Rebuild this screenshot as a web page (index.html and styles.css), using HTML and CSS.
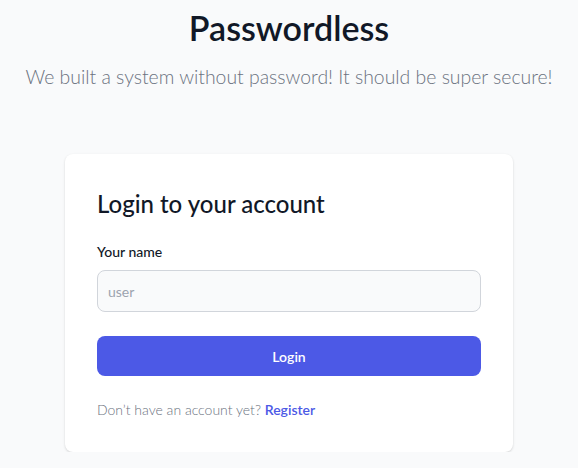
FILE: index.html
```html
<!DOCTYPE html>
<html lang="en">
<head>
<meta charset="utf-8">
<title>Passwordless</title>
<link rel="stylesheet" href="styles.css">
</head>
<body>
<main class="page">
  <header class="hero">
    <h1 class="hero-title">Passwordless</h1>
    <p class="hero-sub">We built a system without password! It should be super secure!</p>
  </header>
  <section class="card">
    <h2 class="card-title">Login to your account</h2>
    <form class="form">
      <div class="field">
        <label class="label" for="name">Your name</label>
        <input class="input" id="name" type="text" placeholder="user">
      </div>
      <button class="btn" type="button">Login</button>
      <p class="footer-text">Don’t have an account yet? <a class="link" href="#">Register</a></p>
    </form>
  </section>
</main>
</body>
</html>
```
FILE: styles.css
```css
* { box-sizing: border-box; }
html, body { margin: 0; padding: 0; }
body {
  background: #f9fafb;
  font-family: "Lato", "Noto Sans", sans-serif;
  color: #111827;
}
.page {
  display: flex;
  flex-direction: column;
  align-items: center;
  padding-top: 4px;
}
.hero { text-align: center; }
.hero-title {
  margin: 0;
  font-size: 34px;
  line-height: 48px;
  font-weight: 600;
  color: #111827;
}
.hero-sub {
  margin: 11px 0 0;
  font-size: 19.4px;
  line-height: 28px;
  font-weight: 300;
  color: #6b7280;
}
.card {
  margin-top: 63px;
  width: 448px;
  background: #fff;
  border-radius: 8px;
  box-shadow: 0 1px 3px rgba(0,0,0,0.1), 0 1px 2px rgba(0,0,0,0.06);
  padding: 32px;
}
.card-title {
  margin: 0;
  font-size: 24px;
  line-height: 36px;
  font-weight: 500;
  color: #111827;
}
.form {
  margin-top: 20px;
  display: flex;
  flex-direction: column;
  gap: 24px;
}
.field { display: flex; flex-direction: column; }
.label {
  font-size: 14px;
  line-height: 20px;
  font-weight: 500;
  margin-bottom: 8px;
}
.input {
  height: 42px;
  border: 1px solid #d1d5db;
  background: #f9fafb;
  border-radius: 8px;
  padding: 0 10px;
  font: inherit;
  font-size: 14px;
  color: #111827;
}
.input::placeholder { color: #9ca3af; }
.btn {
  height: 40px;
  border: 0;
  border-radius: 8px;
  background: #4c59e6;
  color: #fff;
  font: inherit;
  font-size: 14px;
  font-weight: 600;
}
.footer-text {
  margin: 0;
  font-size: 14px;
  line-height: 20px;
  font-weight: 300;
  color: #6b7280;
}
.link {
  color: #4c59e6;
  font-weight: 600;
  text-decoration: none;
}
```
